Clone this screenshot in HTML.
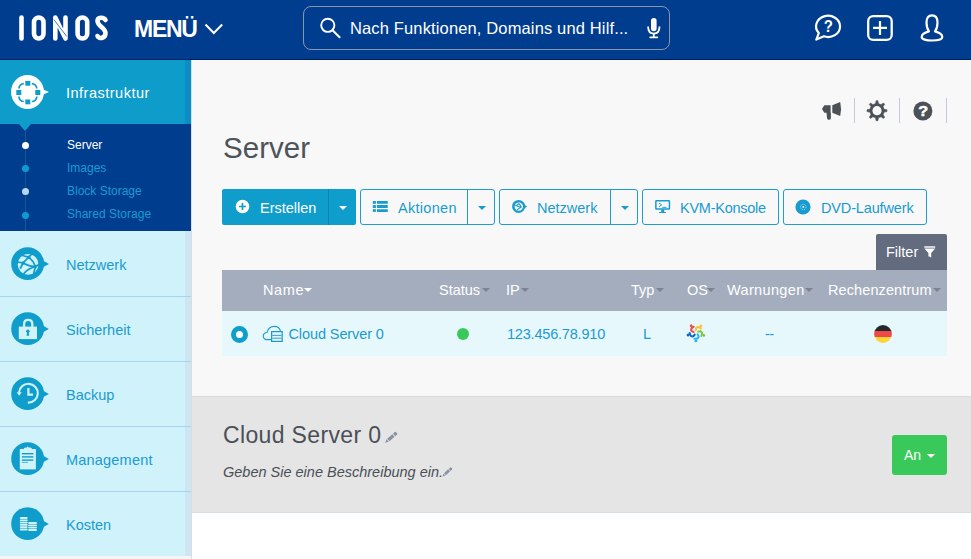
<!DOCTYPE html>
<html><head><meta charset="utf-8">
<style>
*{box-sizing:border-box;margin:0;padding:0}
html,body{width:971px;height:559px;overflow:hidden;background:#f8f8f8;font-family:"Liberation Sans",sans-serif}
div,svg{position:absolute}
.lbl{font-size:14.5px;color:#1a9bd0;white-space:nowrap;line-height:1}
.sep{left:0;width:191px;height:1px;background:#a8d5ec}
.ico{left:11px;width:33px;height:33px;border-radius:50%;background:#0f9dcc}
.ptr{left:43px;width:0;height:0;border-left:6px solid #0f9dcc;border-top:4.5px solid transparent;border-bottom:4.5px solid transparent}
.btn{top:189px;height:36px;border:1px solid #1d9dd0;border-radius:3px}
.bt{font-size:14.5px;color:#1a9bd0;white-space:nowrap;line-height:1;top:201px}
.caret{width:0;height:0;border-left:4px solid transparent;border-right:4px solid transparent;border-top:4px solid #1a9bd0;top:206px}
.th{top:283px;font-size:14.5px;color:#fff;white-space:nowrap;line-height:1}
.tc{width:0;height:0;border-left:4px solid transparent;border-right:4px solid transparent;border-top:4px solid #7b8290;top:288px}
.sm{font-size:12px;color:#1a9bd0;white-space:nowrap;line-height:1;left:67px}
.dot{left:22px;width:7px;height:7px;border-radius:50%;background:#0e9bd0}
</style></head>
<body>
<!-- HEADER -->
<div style="left:0;top:0;width:971px;height:60px;background:#003d8f;border-bottom:1px solid #001f5c"></div>
<svg style="left:0;top:0" width="120" height="60" viewBox="0 0 120 60">
  <g fill="none" stroke="#fff" stroke-width="4.6" stroke-linecap="round" stroke-linejoin="round">
    <path d="M21.5 17.5 V38.5"/>
    <rect x="34" y="17.5" width="9.5" height="21" rx="4.75"/>
    <path d="M55.3 38.5 V17.5 L65.5 38.5 V17.5"/>
    <rect x="77.6" y="17.5" width="9.6" height="21" rx="4.8"/>
  </g>
  <g stroke="#003d8f" stroke-width="0.7" fill="none">
    <path d="M53.8 19.5 L66.8 36.5"/>
  </g>
  <g fill="none" stroke="#fff" stroke-width="4.6" stroke-linecap="round" stroke-linejoin="round">
    <path d="M105.5 20 C104 17 97.5 16.5 97.5 21 C97.5 26 105.5 28 105.5 33 C105.5 39 98.5 39 97.5 36"/>
  </g>
</svg>
<div style="left:134px;top:15.5px;font-size:23px;letter-spacing:-1.25px;font-weight:bold;color:#fff;line-height:1.2">MENÜ</div>
<svg style="left:203px;top:21px" width="22" height="16" viewBox="0 0 22 16"><path d="M2.5 3.5 L10.8 12 L19.2 3.5" fill="none" stroke="#fff" stroke-width="2"/></svg>
<div style="left:303px;top:6px;width:367px;height:44px;border:1px solid #8a95ab;border-radius:8px"></div>
<svg style="left:317px;top:15px" width="26" height="26" viewBox="0 0 26 26"><circle cx="10.8" cy="10.3" r="6.6" fill="none" stroke="#fff" stroke-width="1.9"/><path d="M15.6 15.3 L22.6 22.2" stroke="#fff" stroke-width="2.1" stroke-linecap="round"/></svg>
<div style="left:350px;top:20px;font-size:16.5px;letter-spacing:0.14px;color:#fff;line-height:1;white-space:nowrap">Nach Funktionen, Domains und Hilf...</div>
<svg style="left:644px;top:15px" width="20" height="26" viewBox="0 0 20 26"><rect x="7" y="3" width="5.6" height="13.3" rx="2.8" fill="#fff"/><path d="M4.1 11.5 C4.1 16.5 6.5 18.6 9.8 18.6 C13.1 18.6 15.5 16.5 15.5 11.5" fill="none" stroke="#fff" stroke-width="1.8"/><path d="M9.8 18.5 V22" stroke="#fff" stroke-width="1.8"/><path d="M6.2 22.3 H13.4" stroke="#fff" stroke-width="1.7" stroke-linecap="round"/></svg>
<svg style="left:812px;top:12px" width="32" height="32" viewBox="0 0 32 32"><path d="M6.8 21.1 L4.3 27.6 L11.9 24.3 A12 10.6 0 1 0 6.8 21.1 Z" fill="none" stroke="#fff" stroke-width="2.2" stroke-linejoin="round"/><text x="0" y="0" transform="translate(16.2 20.4) scale(0.88 1.02)" font-family="Liberation Sans" font-weight="bold" font-size="17" fill="#fff" text-anchor="middle">?</text></svg>
<svg style="left:866px;top:14px" width="28" height="28" viewBox="0 0 28 28"><rect x="2.2" y="2.2" width="23.5" height="23.7" rx="5" fill="none" stroke="#fff" stroke-width="2.3"/><path d="M14 7 V20.9 M7 13.95 H21" stroke="#fff" stroke-width="2.2"/></svg>
<svg style="left:918px;top:14px" width="28" height="28" viewBox="0 0 28 28"><path d="M11 17.4 C9.3 15.2 8.5 12.2 8.5 8.5 C8.5 3.8 10.4 1.3 14 1.3 C17.6 1.3 19.5 3.8 19.5 8.5 C19.5 12.2 18.7 15.2 17 17.4 C21.5 18.6 24.3 20.6 24.3 23 C24.3 25.3 19.8 26.5 14 26.5 C8.2 26.5 3.7 25.3 3.7 23 C3.7 20.6 6.5 18.6 11 17.4 Z" fill="none" stroke="#fff" stroke-width="2.2" stroke-linejoin="round"/></svg>

<!-- SIDEBAR -->
<div style="left:0;top:60px;width:192px;height:499px;background:#f5f5f5;border-right:1px solid #d9dde0"></div>
<div style="left:0;top:60px;width:191px;height:64px;background:#0e9ccb"></div>
<div style="left:185px;top:60px;width:6px;height:64px;background:#0b8ec5"></div>
<div style="left:11px;top:75px;width:33px;height:34px;border-radius:50%;background:#fff"></div>
<div style="left:42px;top:88.5px;border-left:7px solid #fff;border-top:3.8px solid transparent;border-bottom:3.8px solid transparent"></div>
<svg style="left:11px;top:75px" width="34" height="34" viewBox="0 0 34 34">
  <rect x="7.9" y="8.6" width="17.9" height="17.9" rx="5" fill="none" stroke="#0e9ccb" stroke-width="1.7"/>
  <g fill="#fff"><rect x="12.8" y="4.5" width="8" height="8"/><rect x="12.8" y="22.5" width="8" height="8"/><rect x="3.9" y="13.5" width="8" height="8"/><rect x="21.8" y="13.5" width="8" height="8"/></g>
  <g fill="#0e9ccb"><rect x="14.3" y="5.9" width="5" height="4.8"/><rect x="14.3" y="24.5" width="5" height="4.8"/><rect x="5.3" y="15" width="5" height="5"/><rect x="24.3" y="15" width="5" height="5"/></g>
</svg>
<div class="lbl" style="left:66px;top:86px;color:#fff;letter-spacing:0.5px">Infrastruktur</div>
<!-- submenu -->
<div style="left:0;top:124px;width:191px;height:107px;background:#003d8f"></div>
<div style="left:18.7px;top:124px;border-top:7px solid #0e9ccb;border-left:6.8px solid transparent;border-right:6.8px solid transparent"></div>
<div style="left:25px;top:130px;width:1px;height:101px;background:#135b85"></div>
<div class="dot" style="top:142px;background:#fff"></div>
<div class="dot" style="top:165px"></div>
<div class="dot" style="top:188px;background:#b5d8ea"></div>
<div class="dot" style="top:212px"></div>
<div class="sm" style="top:139px;color:#fff">Server</div>
<div class="sm" style="top:162px">Images</div>
<div class="sm" style="top:185px">Block Storage</div>
<div class="sm" style="top:208px">Shared Storage</div>
<!-- items -->
<div style="left:0;top:231px;width:191px;height:325px;background:#cff2fb"></div>
<div style="left:185px;top:231px;width:6px;height:325px;background:#cfe5f3"></div>
<div class="sep" style="top:296px"></div>
<div class="sep" style="top:361px"></div>
<div class="sep" style="top:426px"></div>
<div class="sep" style="top:491px"></div>
<svg style="left:8px;top:244px" width="44" height="40" viewBox="0 0 44 40"><circle cx="19.65" cy="19.65" r="16.45" fill="#0f9dcc"/><path d="M34.5 16.3 L40.8 19.9 L34.5 23.5 Z" fill="#0f9dcc"/><circle cx="20.1" cy="20.4" r="10.4" fill="#cff2fb"/><g fill="none" stroke="#0f9dcc" stroke-width="1.7" stroke-linecap="round">
<path d="M15 19 L20.7 13.2 M20.7 13.2 L24 10 M20.7 13.2 L14.5 11.5 M15 19 L9.6 18 M15 19 Q21 22.5 27.5 22.5 M20.7 13.2 Q25 16.5 27.5 22.5 M27.5 22.5 L31 20.5 M27.5 22.5 L25.8 29 M16 29.5 Q20 24.5 27.5 22.5 M15 19 L12.5 24"/></g>
<circle cx="15" cy="19" r="1.7" fill="#0f9dcc"/><circle cx="20.7" cy="13.2" r="1.7" fill="#0f9dcc"/><circle cx="27.5" cy="22.5" r="1.7" fill="#0f9dcc"/></svg>
<svg style="left:8px;top:309px" width="44" height="40" viewBox="0 0 44 40"><circle cx="19.65" cy="19.65" r="16.45" fill="#0f9dcc"/><path d="M34.5 16.3 L40.8 19.9 L34.5 23.5 Z" fill="#0f9dcc"/><path d="M16.1 18.5 V15 Q16.1 10.9 20.2 10.9 Q24.3 10.9 24.3 15 V18.5" fill="none" stroke="#cff2fb" stroke-width="2.3"/>
<rect x="10.8" y="17.6" width="18.2" height="12.5" fill="#cff2fb"/>
<circle cx="19.9" cy="22.3" r="1.7" fill="#0f9dcc"/><path d="M19.2 23 L18.6 26.7 H21.2 L20.6 23 Z" fill="#0f9dcc"/></svg>
<svg style="left:8px;top:374px" width="44" height="40" viewBox="0 0 44 40"><circle cx="19.65" cy="19.65" r="16.45" fill="#0f9dcc"/><path d="M34.5 16.3 L40.8 19.9 L34.5 23.5 Z" fill="#0f9dcc"/><path d="M19.8 28.6 A9.4 9.4 0 1 0 11 18.6" fill="none" stroke="#cff2fb" stroke-width="2.1"/>
<path d="M8.6 18.3 L13.8 18.3 L11.1 21.8 Z" fill="#cff2fb"/>
<path d="M20.4 14 V20.7 H25" fill="none" stroke="#cff2fb" stroke-width="2.2"/></svg>
<svg style="left:8px;top:439px" width="44" height="40" viewBox="0 0 44 40"><circle cx="19.65" cy="19.65" r="16.45" fill="#0f9dcc"/><path d="M34.5 16.3 L40.8 19.9 L34.5 23.5 Z" fill="#0f9dcc"/><rect x="11.8" y="10" width="16.1" height="20.4" fill="#cff2fb"/>
<path d="M15.6 10.6 Q15.6 8.6 17.5 8.6 H18.8 L19.8 7.2 L20.8 8.6 H22.2 Q24.1 8.6 24.1 10.6 Z" fill="#cff2fb"/>
<g fill="#0f9dcc"><rect x="13.9" y="14" width="11.5" height="1.4"/><rect x="13.9" y="17.2" width="11.5" height="1.4"/><rect x="13.9" y="20.4" width="11.5" height="1.4"/><rect x="13.9" y="22.9" width="6" height="0.7"/></g></svg>
<svg style="left:8px;top:504px" width="44" height="40" viewBox="0 0 44 40"><circle cx="19.65" cy="19.65" r="16.45" fill="#0f9dcc"/><path d="M34.5 16.3 L40.8 19.9 L34.5 23.5 Z" fill="#0f9dcc"/><g fill="#cff2fb">
<rect x="11.8" y="12.9" width="7.9" height="2.2" rx="1.1"/><rect x="11.8" y="15.6" width="7.9" height="1.7" rx="0.8"/><rect x="11.8" y="17.8" width="7.9" height="1.7" rx="0.8"/><rect x="11.8" y="20" width="7.9" height="1.7" rx="0.8"/><rect x="11.8" y="22.2" width="7.9" height="1.7" rx="0.8"/><rect x="11.8" y="24.4" width="7.9" height="2.1" rx="1"/>
<rect x="20.1" y="17.9" width="8.9" height="2.1" rx="1"/><rect x="20.1" y="20.5" width="8.9" height="1.7" rx="0.8"/><rect x="20.1" y="22.7" width="8.9" height="1.7" rx="0.8"/><rect x="20.1" y="24.9" width="8.9" height="2.2" rx="1.1"/>
</g></svg>
<div class="lbl" style="left:66px;top:258px">Netzwerk</div>
<div class="lbl" style="left:66px;top:323px">Sicherheit</div>
<div class="lbl" style="left:66px;top:388px">Backup</div>
<div class="lbl" style="left:66px;top:453px;letter-spacing:0.2px">Management</div>
<div class="lbl" style="left:66px;top:518px">Kosten</div>

<!-- MAIN -->
<div style="left:192px;top:60px;width:779px;height:337px;background:#f8f8f8"></div>
<!-- top right tools -->
<svg style="left:820px;top:100px" width="24" height="22" viewBox="0 0 24 22"><path d="M2 8.9 L4.3 5.3 H10.6 V12.7 H10.9 V17.9 Q10.9 19.8 9 19.8 Q7.3 19.8 7 17.9 L6.5 12.7 H4.3 Z" fill="#4c5158"/><path d="M12.3 5.3 L20.2 2 Q22 9 20.2 16 L12.3 12.7 Z" fill="#4c5158"/></svg>
<div style="left:854px;top:98px;width:1px;height:25px;background:#c3cbd6"></div>
<div style="left:899px;top:98px;width:1px;height:25px;background:#c3cbd6"></div>
<div style="left:946px;top:98px;width:1px;height:25px;background:#c3cbd6"></div>
<svg style="left:866px;top:100px" width="22" height="22" viewBox="0 0 22 22"><path d="M10.10 0.74 L11.90 0.74 L12.40 3.54 L15.08 4.65 L17.41 3.02 L18.68 4.29 L17.05 6.62 L18.16 9.30 L20.96 9.80 L20.96 11.60 L18.16 12.10 L17.05 14.78 L18.68 17.11 L17.41 18.38 L15.08 16.75 L12.40 17.86 L11.90 20.66 L10.10 20.66 L9.60 17.86 L6.92 16.75 L4.59 18.38 L3.32 17.11 L4.95 14.78 L3.84 12.10 L1.04 11.60 L1.04 9.80 L3.84 9.30 L4.95 6.62 L3.32 4.29 L4.59 3.02 L6.92 4.65 L9.60 3.54 Z" fill="#4c5158" stroke="#4c5158" stroke-width="0.6" stroke-linejoin="round"/><circle cx="11" cy="10.7" r="4.6" fill="#f8f8f8"/></svg>
<svg style="left:913px;top:101px" width="20" height="20" viewBox="0 0 20 20"><circle cx="9.9" cy="10" r="9.5" fill="#4c5158"/><text x="0" y="0" transform="translate(10.2 15.3) scale(1.05 1)" font-family="Liberation Sans" font-weight="bold" font-size="15.5" fill="#fff" text-anchor="middle" stroke="#fff" stroke-width="0.5">?</text></svg>
<div style="left:223px;top:132.8px;font-size:29.5px;letter-spacing:0.05px;color:#4d535b;line-height:1;white-space:nowrap">Server</div>

<!-- buttons -->
<div style="left:222px;top:189px;width:134px;height:36px;background:#0f9dcc;border-radius:2px"></div>
<div style="left:328px;top:189px;width:1px;height:36px;background:#0b84b4"></div>
<svg style="left:235px;top:199px" width="15" height="15" viewBox="0 0 15 15"><circle cx="7.5" cy="7.5" r="6.8" fill="#fff"/><path d="M7.5 4 V11 M4 7.5 H11" stroke="#0f9dcc" stroke-width="1.7"/></svg>
<div class="bt" style="left:260px;color:#fff">Erstellen</div>
<div class="caret" style="left:339px;border-top-color:#fff"></div>

<div class="btn" style="left:360px;width:135px"></div>
<div style="left:467px;top:189px;width:1px;height:36px;background:#1d9dd0"></div>
<svg style="left:372px;top:199px" width="17" height="15" viewBox="0 0 17 15"><g fill="#1a9bd0"><rect x="0.8" y="2" width="3.1" height="2.8"/><rect x="4.9" y="2" width="10.9" height="2.8" rx="0.4"/><rect x="0.8" y="6.1" width="3.1" height="2.9"/><rect x="4.9" y="6.1" width="10.9" height="2.9" rx="0.4"/><rect x="0.8" y="10.2" width="3.1" height="2.7"/><rect x="4.9" y="10.2" width="10.9" height="2.7" rx="0.4"/></g></svg>
<div class="bt" style="left:398px;letter-spacing:0.3px">Aktionen</div>
<div class="caret" style="left:478px"></div>

<div class="btn" style="left:499px;width:139px"></div>
<div style="left:610px;top:189px;width:1px;height:36px;background:#1d9dd0"></div>
<svg style="left:511px;top:199px" width="17" height="16" viewBox="0 0 17 16"><circle cx="7.6" cy="7.4" r="6.5" fill="#1a9bd0"/><path d="M13.2 5.4 L16.1 7.4 L13.2 9.4 Z" fill="#1a9bd0"/><circle cx="7.8" cy="7.6" r="4.2" fill="#f8f8f8"/><g stroke="#1a9bd0" stroke-width="1.1" fill="none"><path d="M5.5 6.8 L7.6 4.5 M5.5 6.8 Q8 8 10.4 8.2 M7.6 4.5 Q9.3 6 10.4 8.2 M6 11 Q8 9 10.4 8.2 M5.5 6.8 L3.8 6.5"/></g></svg>
<div class="bt" style="left:537px">Netzwerk</div>
<div class="caret" style="left:621px"></div>

<div class="btn" style="left:642px;width:137px"></div>
<svg style="left:654px;top:199px" width="17" height="15" viewBox="0 0 17 15"><rect x="1.85" y="1.65" width="13.6" height="8.4" rx="0.6" fill="none" stroke="#1a9bd0" stroke-width="1.5"/><path d="M5 4 L7.6 5.9 L5 7.8 M8.3 8.3 H12.5" stroke="#1a9bd0" stroke-width="1" fill="none"/><path d="M7.2 10.5 H10.2 V12.9 H12 V13.9 H5 V12.9 H7.2 Z" fill="#1a9bd0"/></svg>
<div class="bt" style="left:680px;letter-spacing:-0.25px">KVM-Konsole</div>

<div class="btn" style="left:783px;width:144px"></div>
<svg style="left:795px;top:199px" width="16" height="16" viewBox="0 0 16 16"><circle cx="8" cy="8" r="7.6" fill="#1a9bd0"/><circle cx="8.3" cy="8" r="2.7" fill="none" stroke="#a9dcef" stroke-width="0.9" stroke-dasharray="1.2 0.9"/><circle cx="8.3" cy="8" r="0.9" fill="#e0f3fa"/></svg>
<div class="bt" style="left:821px;letter-spacing:-0.15px">DVD-Laufwerk</div>

<!-- filter -->
<div style="left:876px;top:234px;width:71px;height:36px;background:#636b7e;border-radius:2px 2px 0 0"></div>
<div style="left:886px;top:245px;font-size:14.5px;color:#fff;line-height:1;white-space:nowrap">Filter</div>
<svg style="left:923px;top:245px" width="14" height="14" viewBox="0 0 14 14"><rect x="1.3" y="1.3" width="10.9" height="1.4" fill="#fff"/><path d="M1.3 3.5 H12.2 L8.2 8 V12.6 L5.4 11.2 V8 Z" fill="#fff"/></svg>

<!-- table -->
<div style="left:222px;top:270px;width:725px;height:41px;background:#a4adbd"></div>
<div style="left:222px;top:311px;width:725px;height:45px;background:#e7f8fd"></div>
<div class="th" style="left:263px;letter-spacing:0.6px">Name</div><div class="tc" style="left:304px;border-top-color:#fff"></div>
<div class="th" style="left:439px">Status</div><div class="tc" style="left:482px"></div>
<div class="th" style="left:506px">IP</div><div class="tc" style="left:521px"></div>
<div class="th" style="left:631px">Typ</div><div class="tc" style="left:656px"></div>
<div class="th" style="left:687px">OS</div><div class="tc" style="left:707px"></div>
<div class="th" style="left:727px;letter-spacing:0.35px">Warnungen</div><div class="tc" style="left:805px"></div>
<div class="th" style="left:828px;letter-spacing:0.1px">Rechenzentrum</div><div class="tc" style="left:933px"></div>

<div style="left:231px;top:325.5px;width:17px;height:17px;border-radius:50%;border:5.2px solid #0f9dcc;background:#fff"></div>
<svg style="left:262px;top:324px" width="23" height="19" viewBox="0 0 23 19"><path d="M9.5 15.6 H5 C2.6 15.6 1.3 13.9 1.3 12 C1.3 9.9 3 8.4 5 8.5 C5.7 4.9 8.6 2.4 12.6 2.4 C15.6 2.4 17.6 4.2 18.5 6.9" fill="none" stroke="#1a9bd0" stroke-width="1.15"/><rect x="9.6" y="7.6" width="10.6" height="9.8" fill="#e4f3f8" stroke="#1a9bd0" stroke-width="1.2"/><path d="M10.2 11.4 H19.6 M10.2 14.2 H19.6" stroke="#1a9bd0" stroke-width="0.9"/></svg>
<div class="bt" style="left:288.5px;top:327px;letter-spacing:-0.1px">Cloud Server 0</div>
<div style="left:457px;top:328px;width:12px;height:12px;border-radius:50%;background:#39c95a"></div>
<div class="bt" style="left:507px;top:327px;letter-spacing:-0.2px">123.456.78.910</div>
<div class="bt" style="left:643px;top:327px">L</div>
<svg style="left:682px;top:320px" width="28" height="26" viewBox="0 0 28 26"><g transform="translate(14 12.6)"><g transform="rotate(0)"><path d="M1.6 1.8 Q3.4 4.2 1.9 5.6 Q0.4 6.6 -1.6 6.1" fill="none" stroke="#2bb3f3" stroke-width="2" stroke-linecap="round"/><circle cx="-0.1" cy="8.3" r="1.45" fill="#2bb3f3"/></g><g transform="rotate(-72)"><path d="M1.6 1.8 Q3.4 4.2 1.9 5.6 Q0.4 6.6 -1.6 6.1" fill="none" stroke="#79c742" stroke-width="2" stroke-linecap="round"/><circle cx="-0.1" cy="8.3" r="1.45" fill="#79c742"/></g><g transform="rotate(-144)"><path d="M1.6 1.8 Q3.4 4.2 1.9 5.6 Q0.4 6.6 -1.6 6.1" fill="none" stroke="#fbc12e" stroke-width="2" stroke-linecap="round"/><circle cx="-0.1" cy="8.3" r="1.45" fill="#fbc12e"/></g><g transform="rotate(144)"><path d="M1.6 1.8 Q3.4 4.2 1.9 5.6 Q0.4 6.6 -1.6 6.1" fill="none" stroke="#ef4a4c" stroke-width="2" stroke-linecap="round"/><circle cx="-0.1" cy="8.3" r="1.45" fill="#ef4a4c"/></g><g transform="rotate(72)"><path d="M1.6 1.8 Q3.4 4.2 1.9 5.6 Q0.4 6.6 -1.6 6.1" fill="none" stroke="#0f63c8" stroke-width="2" stroke-linecap="round"/><circle cx="-0.1" cy="8.3" r="1.45" fill="#0f63c8"/></g></g></svg>
<div class="bt" style="left:765px;top:327px;letter-spacing:-0.6px">--</div>
<svg style="left:874px;top:325px" width="18" height="18" viewBox="0 0 18 18"><defs><clipPath id="fc"><circle cx="9" cy="9" r="8.9"/></clipPath></defs><g clip-path="url(#fc)"><rect x="0" y="0" width="18" height="6" fill="#232a2e"/><rect x="0" y="6" width="18" height="6" fill="#ef4848"/><rect x="0" y="12" width="18" height="6" fill="#fdd535"/></g></svg>

<!-- detail panel -->
<div style="left:192px;top:396px;width:779px;height:1px;background:#d6dadf"></div>
<div style="left:192px;top:397px;width:779px;height:115px;background:#e5e5e5"></div>
<div style="left:192px;top:512px;width:779px;height:1px;background:#d6dde3"></div>
<div style="left:192px;top:513px;width:779px;height:46px;background:#ffffff"></div>
<div style="left:223px;top:424px;font-size:23px;letter-spacing:0.35px;color:#4a5058;line-height:1;white-space:nowrap">Cloud Server 0</div>
<svg style="left:381px;top:428px" width="20" height="20" viewBox="0 0 20 20"><g transform="translate(4.1 14.7) rotate(-41) scale(1)" fill="#8a93a6"><path d="M0 0 L3.4 -1.7 V1.7 Z"/><rect x="4.2" y="-1.7" width="6.9" height="3.4"/><rect x="11.9" y="-1.7" width="3.3" height="3.4" rx="0.8"/></g></svg>
<div style="left:223px;top:465px;font-size:14.5px;font-style:italic;color:#4a5058;line-height:1;white-space:nowrap">Geben Sie eine Beschreibung ein.</div>
<svg style="left:439px;top:463px" width="20" height="20" viewBox="0 0 20 20"><g transform="translate(3.4 13.6) rotate(-43) scale(0.83)" fill="#8a93a6"><path d="M0 0 L3.4 -1.7 V1.7 Z"/><rect x="4.2" y="-1.7" width="6.9" height="3.4"/><rect x="11.9" y="-1.7" width="3.3" height="3.4" rx="0.8"/></g></svg>
<div style="left:892px;top:435px;width:55px;height:40px;background:#39c95a;border-radius:3px"></div>
<div style="left:904px;top:448px;font-size:14px;color:#fff;line-height:1;white-space:nowrap">An</div>
<div style="left:927px;top:454px;border-left:4px solid transparent;border-right:4px solid transparent;border-top:4px solid #fff"></div>

</body></html>
